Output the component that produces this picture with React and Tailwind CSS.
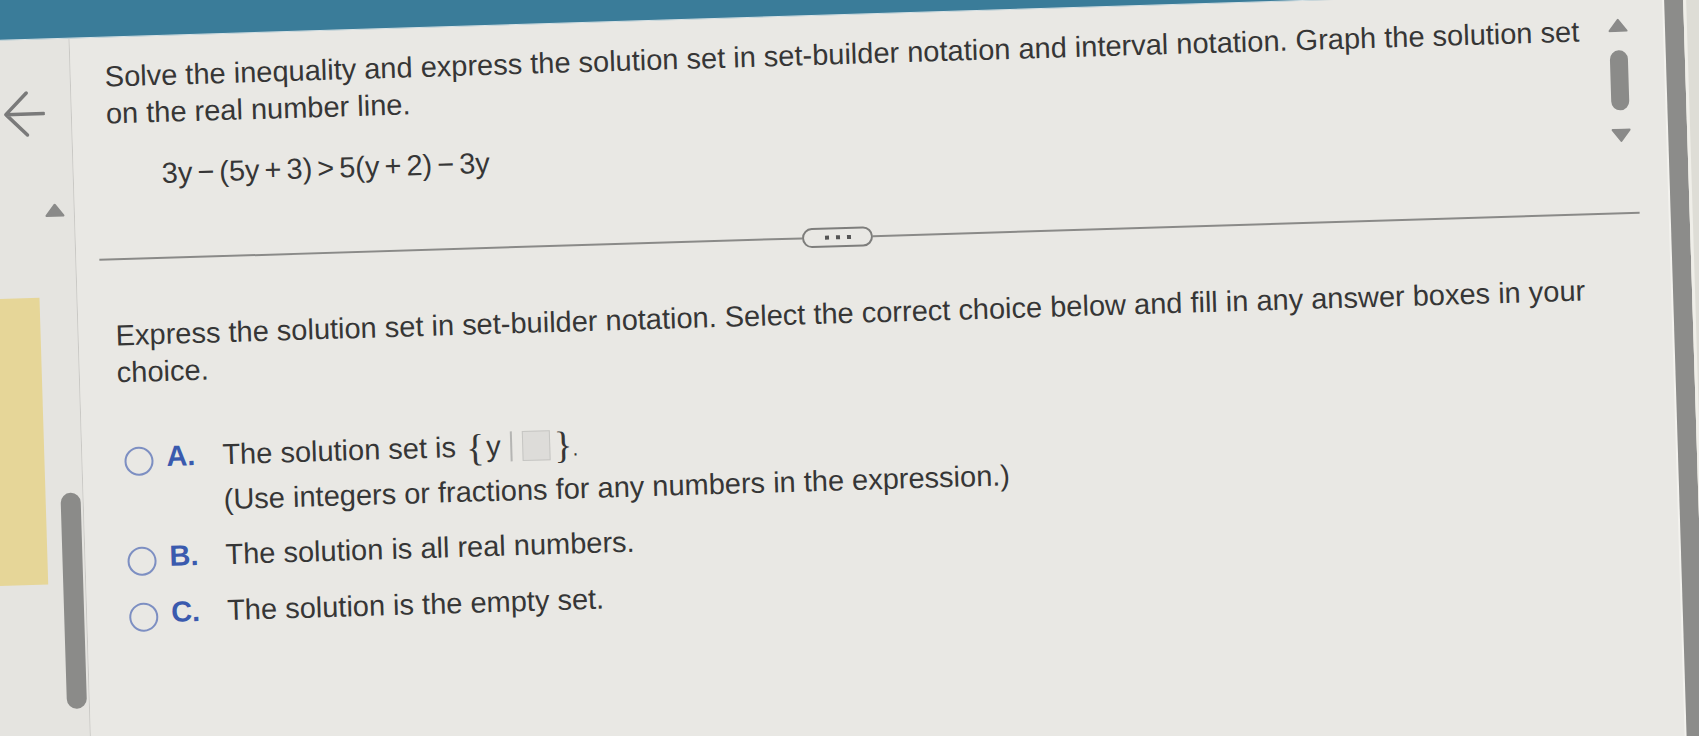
import React from "react";

function TriUp({ className = "" }) {
  return (
    <svg width="20" height="14" viewBox="0 0 20 14" className={className}>
      <path d="M10 1.5 L18.5 12.5 L1.5 12.5 Z" fill="#8a8a89" stroke="#8a8a89" strokeWidth="2" strokeLinejoin="round" />
    </svg>
  );
}

function TriDown({ className = "" }) {
  return (
    <svg width="20" height="14" viewBox="0 0 20 14" className={className}>
      <path d="M1.5 1.5 L18.5 1.5 L10 12.5 Z" fill="#8a8a89" stroke="#8a8a89" strokeWidth="2" strokeLinejoin="round" />
    </svg>
  );
}

function Radio() {
  return <div className="mt-[8px] ml-[8px] h-[29px] w-[29px] shrink-0 rounded-full border-[2.5px] border-[#7d8fc2]" />;
}

function Op({ children }) {
  return <span className="mx-[5px]">{children}</span>;
}

export default function App() {
  return (
    <div className="h-[736px] w-[1699px] overflow-hidden bg-[#e6e5e1] font-['Liberation_Sans',Arial,sans-serif] text-[#363636]">
      <div className="-ml-[40px] -mt-[40px] flex h-[816px] w-[1779px] rotate-[-1.75deg] flex-col bg-[#e8e7e3]">
        {/* top teal bar */}
        <div className="h-[55px] shrink-0 border-b border-[#d9e3e6] bg-[#3a7c99]" />

        <div className="flex flex-1">
          {/* left column */}
          <div className="flex w-[120px] shrink-0 border-r-[1.5px] border-[#c9c8c4] bg-[#e5e4e0]">
            <div className="flex w-[90px] shrink-0 flex-col">
              <svg width="42" height="46" viewBox="0 0 42 46" className="ml-[51px] mt-[51px] shrink-0">
                <path d="M41 23 H3 M24 2 L3 23 L24 44" fill="none" stroke="#7a7a7a" strokeWidth="3.5" strokeLinecap="round" strokeLinejoin="round" />
              </svg>
              <div className="mt-[161px] h-[287px] w-[82px] bg-[#e6d698]" />
            </div>
            <div className="flex w-[30px] shrink-0 flex-col">
              <TriUp className="mt-[164px] shrink-0" />
              <div className="ml-[7px] mt-[276px] h-[216px] w-[20px] rounded-full bg-[#8b8b89]" />
            </div>
          </div>

          {/* main panel */}
          <div className="flex w-[1595px] shrink-0 flex-col border-r-2 border-[#f3f2ee] bg-[#e9e8e4]">
            <div className="flex h-[165px] shrink-0 items-start">
              <div className="ml-[34px] w-[1500px] shrink-0 pt-[21px] text-[29px] leading-[37px]">
                <p>
                  Solve the inequality and express the solution set in set-builder notation and interval notation. Graph the solution set on the real number line.
                </p>
                <p className="ml-[54px] mt-[24px] whitespace-nowrap">
                  3y<Op>−</Op>(5y<Op>+</Op>3)<Op>&gt;</Op>5(y<Op>+</Op>2)<Op>−</Op>3y
                </p>
              </div>
              <div className="ml-[4px] flex w-[20px] shrink-0 flex-col items-center">
                <TriUp className="mt-[27px]" />
                <div className="mt-[18px] h-[60px] w-[18px] rounded-full bg-[#8b8b89]" />
                <TriDown className="mt-[18px]" />
              </div>
            </div>

            {/* separator with ellipsis button */}
            <div className="ml-[23px] mt-[47px] flex h-[20px] items-center">
              <div className="h-[1.5px] w-[703px] bg-[#8a8a88]" />
              <div className="flex h-[20px] w-[71px] shrink-0 items-center justify-center gap-[7px] rounded-full border-2 border-[#7e7e7c]">
                <span className="h-[4px] w-[4px] bg-[#555]" />
                <span className="h-[4px] w-[4px] bg-[#555]" />
                <span className="h-[4px] w-[4px] bg-[#555]" />
              </div>
              <div className="h-[1.5px] w-[767px] bg-[#8a8a88]" />
            </div>

            <p className="ml-[37px] mt-[48px] w-[1500px] text-[29px] leading-[37px]">
              Express the solution set in set-builder notation. Select the correct choice below and fill in any answer boxes in your choice.
            </p>

            {/* options */}
            <div className="ml-[34px] mt-[48px] flex flex-col text-[29px] leading-[37px]">
              <div className="flex items-start">
                <Radio />
                <div className="ml-[13px] w-[56px] shrink-0 font-bold text-[#3a5aae]">A.</div>
                <div className="flex flex-col">
                  <div className="flex h-[37px] items-center whitespace-nowrap">
                    <span>The solution set is</span>
                    <span className="ml-[10px] font-['Liberation_Serif',serif] text-[38px] leading-none">{"{"}</span>
                    <span className="ml-[2px]">y</span>
                    <span className="mx-[10px] h-[30px] w-[1.5px] shrink-0 bg-[#b5b5b3]" />
                    <span className="h-[30px] w-[28px] shrink-0 border border-[#c6c6c3] bg-[#dddcd9]" />
                    <span className="ml-[4px] font-['Liberation_Serif',serif] text-[38px] leading-none">{"}"}</span>
                    <span className="mt-[8px] text-[20px] leading-none">.</span>
                  </div>
                  <div className="mt-[8px] whitespace-nowrap">(Use integers or fractions for any numbers in the expression.)</div>
                </div>
              </div>
              <div className="mt-[18px] flex items-start">
                <Radio />
                <div className="ml-[13px] w-[56px] shrink-0 font-bold text-[#3a5aae]">B.</div>
                <div className="whitespace-nowrap">The solution is all real numbers.</div>
              </div>
              <div className="mt-[19px] flex items-start">
                <Radio />
                <div className="ml-[13px] w-[56px] shrink-0 font-bold text-[#3a5aae]">C.</div>
                <div className="whitespace-nowrap">The solution is the empty set.</div>
              </div>
            </div>
          </div>

          {/* right bezel */}
          <div className="w-[19px] shrink-0 bg-[#8c8c8a]" />
          <div className="flex-1 border-l-[3px] border-[#efeee8] bg-[#deddd6]" />
        </div>
      </div>
    </div>
  );
}
